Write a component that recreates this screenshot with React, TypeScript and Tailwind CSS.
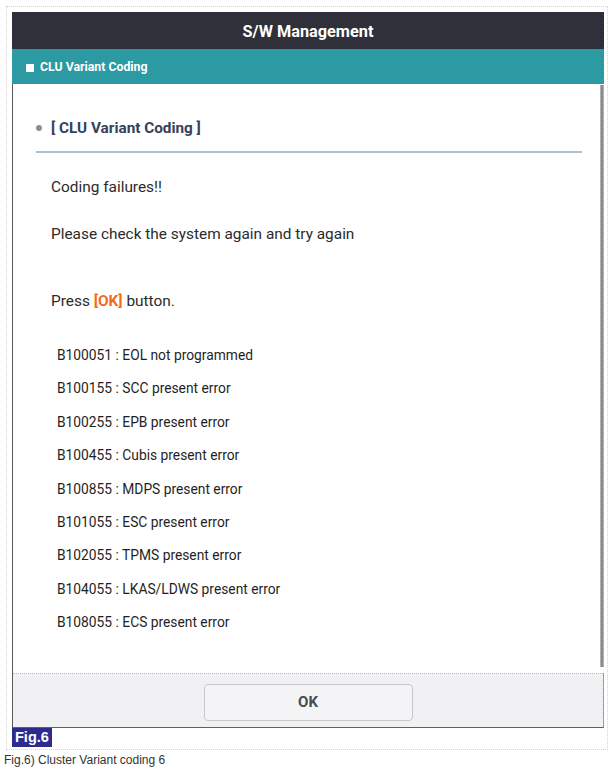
import React from "react";

const errors = [
  "B100051 : EOL not programmed",
  "B100155 : SCC present error",
  "B100255 : EPB present error",
  "B100455 : Cubis present error",
  "B100855 : MDPS present error",
  "B101055 : ESC present error",
  "B102055 : TPMS present error",
  "B104055 : LKAS/LDWS present error",
  "B108055 : ECS present error",
];

export default function App() {
  return (
    <div className="w-[612px] h-[770px] bg-white overflow-hidden" style={{ fontFamily: "Roboto, 'Liberation Sans', sans-serif" }}>
      <div className="ml-[6px] mt-[6px] w-[602px] h-[744px] border border-dotted border-[#d4d4d4] pt-[5px] pl-[5px]">
        <div className="w-[592px] flex flex-col">
          {/* Header */}
          <div className="h-[37px] pt-[3px] bg-[#2f3039] flex items-center justify-center">
            <span className="text-white font-bold text-[16.3px]">S/W Management</span>
          </div>
          {/* Teal bar */}
          <div className="h-[35px] pt-[2px] bg-[#2c9aa2] flex items-center pl-[14px] gap-[6px]">
            <div className="w-[8px] h-[8px] bg-white" />
            <span className="text-white font-bold text-[12.3px]">CLU Variant Coding</span>
          </div>
          {/* Content */}
          <div className="h-[589px] flex border-l border-[#5a5a5a]">
            <div className="flex-1 pl-[23px] pr-[18px]">
              <div className="mt-[34px] h-[20px] flex items-center">
                <div className="w-[6px] h-[6px] rounded-full bg-[#8a8f98]" />
                <span className="ml-[9px] text-[15.3px] font-bold text-[#36415a]">[ CLU Variant Coding ]</span>
              </div>
              <div className="mt-[13px] h-[2px] bg-[#a9c3d3]" />
              <div className="pl-[15px] text-[#2b2b2b] text-[15.4px]">
                <div className="mt-[24px] h-[20px] leading-[20px]">Coding failures!!</div>
                <div className="mt-[27px] h-[20px] leading-[20px]">Please check the system again and try again</div>
                <div className="mt-[47px] h-[20px] leading-[20px]">
                  Press <span className="text-[#f26a1b] font-bold">[OK]</span> button.
                </div>
                <div className="mt-[35px] pl-[6px] flex flex-col text-[13.8px] text-[#1f1f1f]">
                  {errors.map((e) => (
                    <div key={e} className="h-[33.4px] leading-[18px]">{e}</div>
                  ))}
                </div>
              </div>
            </div>
            <div className="w-[4px] mt-[1px] mb-[6px] bg-[#8c8c8c] border-x border-[#b0b0b0]" />
          </div>
          {/* Footer */}
          <div className="h-[55px] flex flex-col border-l border-[#5a5a5a] border-r border-r-[#9a9a9a] border-b border-b-[#606060] bg-[#f1f1f4]">
            <div className="h-0 border-t border-dotted border-[#bdbdbd]" />
            <div className="flex-1 flex items-start justify-center pt-[10px]">
              <div className="w-[209px] h-[37px] rounded-[4px] border border-[#c8c8cc] bg-[#f4f4f6] flex items-center justify-center">
                <span className="font-bold text-[15px] text-[#474c55]">OK</span>
              </div>
            </div>
          </div>
          {/* Fig label */}
          <div className="flex">
            <div className="h-[19px] px-[3px] bg-[#2b2c8e] text-white font-bold text-[14.5px] leading-[19px]" style={{ fontFamily: "'Liberation Sans', Arial, sans-serif" }}>
              Fig.6
            </div>
          </div>
        </div>
      </div>
      <div className="pl-[4px] mt-[2px] text-[12px] text-[#333] leading-[16px]" style={{ fontFamily: "'Liberation Sans', Arial, sans-serif" }}>
        Fig.6) Cluster Variant coding 6
      </div>
    </div>
  );
}
